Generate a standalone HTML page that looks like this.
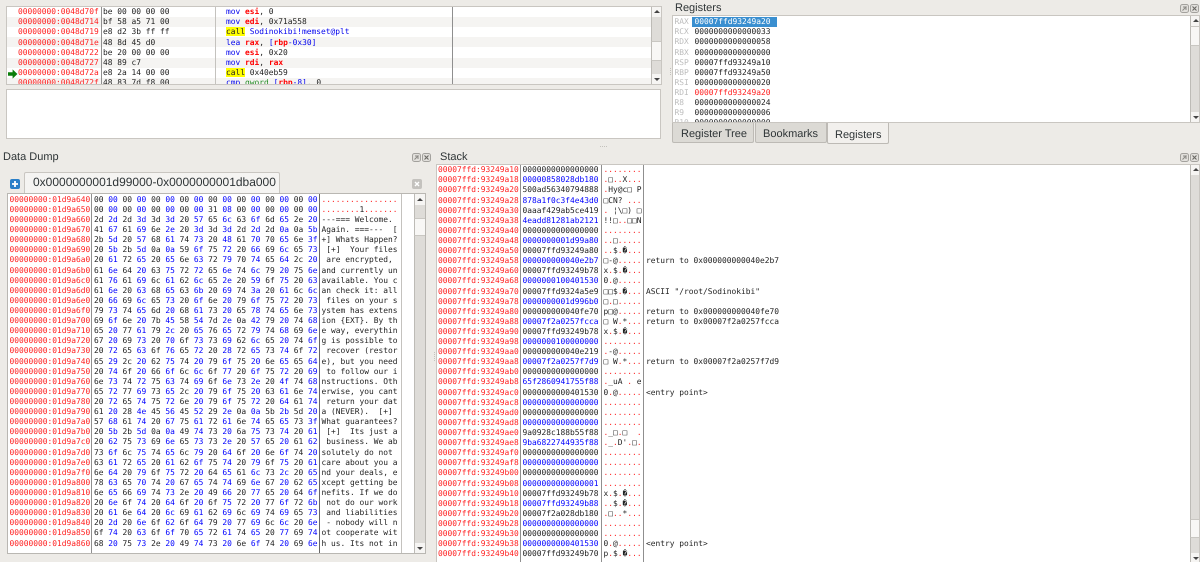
<!DOCTYPE html>
<html><head><meta charset="utf-8"><title>Data Dump</title>
<style>
html,body{margin:0;padding:0}
body{width:1200px;height:562px;overflow:hidden;background:#edebe7;position:relative;font-family:"Liberation Sans",sans-serif;text-rendering:geometricPrecision}
div,pre,svg{position:absolute;margin:0}
pre{font:7.9px/10.11px "DejaVu Sans Mono",monospace;color:#222;text-rendering:geometricPrecision;filter:blur(.3px)}
pre b{font-weight:normal;color:#0000ff}
pre i{font-style:normal;color:#ff2020}
pre u{text-decoration:none;font-weight:bold;color:#ff0000}
pre em{font-style:normal;color:#0000ee}
pre s{text-decoration:none;background:#ffff00;color:#222}
pre q{quotes:none;color:#228b22}
.red{color:#ff2020}
.frame{background:#fff;border:1px solid #c9c6c1;box-sizing:border-box}
.t{font-size:11px;line-height:13px;color:#2e3436;white-space:nowrap}
.v{width:1px;background:#8f8f8f}
.tr{background:#dedcd8;border-left:1px solid #bdbbb6;box-sizing:border-box}
.th{background:#f8f7f5;border-left:1px solid #bdbbb6;border-top:1px solid #c9c7c2;border-bottom:1px solid #c9c7c2;box-sizing:border-box}
.ar{background:#f6f5f3;border-left:1px solid #bdbbb6;box-sizing:border-box}
.up,.dn{width:0;height:0;border-left:3px solid transparent;border-right:3px solid transparent}
.up{border-bottom:3px solid #444}
.dn{border-top:3px solid #444}
.st{background:#f5f4f2;height:10px}
.tab{background:#dcdad5;border:1px solid #bdbab5;border-top:0;border-radius:0 0 2px 2px;box-sizing:border-box}
.dv{width:1px;background:repeating-linear-gradient(#c4c2bd 0 1px,transparent 1px 2px)}
.dh{height:1px;background:repeating-linear-gradient(90deg,#c4c2bd 0 1px,transparent 1px 2px)}
</style></head><body>

<!-- Disassembly panel -->
<div class="frame" style="left:6px;top:6px;width:656px;height:79px;overflow:hidden">
<div class="st" style="left:0;top:10px;width:645px"></div>
<div class="st" style="left:0;top:30px;width:645px"></div>
<div class="st" style="left:0;top:51px;width:645px"></div>
<div class="st" style="left:0;top:71px;width:645px"></div>
<div class="v" style="left:94px;top:0;height:79px"></div>
<div style="left:208px;top:0;height:79px;width:1px;background:#c4c2be"></div>
<div class="v" style="left:445px;top:0;height:79px"></div>
<pre class="red" style="left:11px;top:0.2px">00000000:0048d70f
00000000:0048d714
00000000:0048d719
00000000:0048d71e
00000000:0048d722
00000000:0048d727
00000000:0048d72a
00000000:0048d72f</pre>
<pre style="left:96px;top:0.2px">be 00 00 00 00
bf 58 a5 71 00
e8 d2 3b ff ff
48 8d 45 d0
be 20 00 00 00
48 89 c7
e8 2a 14 00 00
48 83 7d f8 00</pre>
<pre style="left:219px;top:0.2px"><em>mov</em> <u>esi</u>, 0
<em>mov</em> <u>edi</u>, 0x71a558
<s>call</s> <em>Sodinokibi!memset@plt</em>
<em>lea</em> <u>rax</u>, <em>[</em><u>rbp</u><em>-0x30]</em>
<em>mov</em> <u>esi</u>, 0x20
<em>mov</em> <u>rdi</u>, <u>rax</u>
<s>call</s> 0x40eb59
<em>cmp</em> <q>qword</q> <em>[</em><u>rbp</u><em>-8]</em>, 0</pre>
<svg style="left:1px;top:62px" width="10" height="10" viewBox="0 0 10 10"><path d="M0 3.2H4.6V0.4L9.4 5L4.6 9.6V6.8H0Z" fill="#0a7d0a"/></svg>
<div class="tr" style="left:644px;top:0;width:10px;height:77px"></div>
<div class="ar" style="left:644px;top:0;width:10px;height:10px"></div>
<div class="up" style="left:647px;top:3px"></div>
<div class="th" style="left:644px;top:34px;width:10px;height:20px"></div>
<div class="ar" style="left:644px;top:67px;width:10px;height:10px"></div>
<div class="dn" style="left:647px;top:71px"></div>
</div>
<div class="frame" style="left:6px;top:89px;width:655px;height:50px"></div>
<div class="dh" style="left:600px;top:146px;width:8px"></div>
<div class="dv" style="left:670px;top:68px;height:8px"></div>
<div class="dv" style="left:434px;top:352px;height:10px"></div>

<!-- Registers -->
<div class="t" style="left:675px;top:2px">Registers</div>
<svg style="left:1180px;top:4px" width="20" height="9" viewBox="0 0 20 9"><rect x=".5" y=".5" width="8" height="8" rx="2" fill="#e2e0dc" stroke="#a3a19d"/><rect x="10.5" y=".5" width="8" height="8" rx="2" fill="#e2e0dc" stroke="#a3a19d"/><path d="M2.5 6.5L6.5 2.5M3 3H6V6" stroke="#8a8884" fill="none"/><path d="M12.5 2.5L16.5 6.5M16.5 2.5L12.5 6.5" stroke="#6a6864" stroke-width="1.1"/></svg>
<div class="frame" style="left:672px;top:15px;width:528px;height:108px;overflow:hidden">
<div style="left:19px;top:1px;width:85px;height:10px;background:#3a8fd0"></div>
<pre style="left:1.5px;top:1.2px;color:#bdbdbd">RAX
RCX
RDX
RBX
RSP
RBP
RSI
RDI
R8
R9
R10</pre>
<pre style="left:21.5px;top:1.2px"><span style="color:#fff">00007ffd93249a20</span>
0000000000000033
0000000000000058
0000000000000000
00007ffd93249a10
00007ffd93249a50
0000000000000020
<span style="color:#ff2020">00007ffd93249a20</span>
0000000000000024
0000000000000006
0000000000000000</pre>
<div class="tr" style="left:517px;top:0;width:10px;height:106px"></div>
<div class="ar" style="left:517px;top:0;width:10px;height:10px"></div>
<div class="up" style="left:519.5px;top:3px"></div>
<div class="th" style="left:517px;top:10px;width:10px;height:20px"></div>
<div class="ar" style="left:517px;top:96px;width:10px;height:10px"></div>
<div class="dn" style="left:519.5px;top:100px"></div>
</div>
<div class="tab" style="left:672px;top:123px;width:82px;height:20px"></div>
<div class="tab" style="left:755px;top:123px;width:72px;height:20px"></div>
<div class="tab" style="left:827px;top:123px;width:62px;height:21px;background:#f2f0ed"></div>
<div class="t" style="left:681px;top:128px">Register Tree</div>
<div class="t" style="left:763px;top:128px">Bookmarks</div>
<div class="t" style="left:835px;top:129px">Registers</div>

<!-- Data Dump -->
<div class="t" style="left:3px;top:151px">Data Dump</div>
<svg style="left:412px;top:153px" width="20" height="9" viewBox="0 0 20 9"><rect x=".5" y=".5" width="8" height="8" rx="2" fill="#e2e0dc" stroke="#a3a19d"/><rect x="10.5" y=".5" width="8" height="8" rx="2" fill="#e2e0dc" stroke="#a3a19d"/><path d="M2.5 6.5L6.5 2.5M3 3H6V6" stroke="#8a8884" fill="none"/><path d="M12.5 2.5L16.5 6.5M16.5 2.5L12.5 6.5" stroke="#6a6864" stroke-width="1.1"/></svg>
<svg style="left:10px;top:179px" width="10" height="10" viewBox="0 0 10 10"><rect width="10" height="10" rx="2" fill="#2a7fc8"/><path d="M5 2V8M2 5H8" stroke="#fff" stroke-width="1.8"/></svg>
<div style="left:24px;top:172px;width:256px;height:22px;background:#f5f4f2;border:1px solid #c9c6c1;border-bottom:0;border-radius:2px 2px 0 0;box-sizing:border-box"></div>
<div class="t" style="left:33px;top:175px;font-size:12px;line-height:14px">0x0000000001d99000-0x0000000001dba000</div>
<svg style="left:412px;top:179px" width="10" height="10" viewBox="0 0 10 10"><rect width="10" height="10" rx="2" fill="#c4c2be"/><path d="M3 3L7 7M7 3L3 7" stroke="#fff" stroke-width="1.4"/></svg>
<div class="frame" style="left:7px;top:193px;width:419px;height:361px;overflow:hidden;border:1px solid #b9b7b2">
<div class="v" style="left:83px;top:0;height:360px"></div>
<div class="v" style="left:311px;top:0;height:360px;background:#666"></div>
<div class="v" style="left:393px;top:0;height:360px;background:#c4c2be"></div>
<pre class="red" style="left:1.5px;top:0.8px">00000000:01d9a640
00000000:01d9a650
00000000:01d9a660
00000000:01d9a670
00000000:01d9a680
00000000:01d9a690
00000000:01d9a6a0
00000000:01d9a6b0
00000000:01d9a6c0
00000000:01d9a6d0
00000000:01d9a6e0
00000000:01d9a6f0
00000000:01d9a700
00000000:01d9a710
00000000:01d9a720
00000000:01d9a730
00000000:01d9a740
00000000:01d9a750
00000000:01d9a760
00000000:01d9a770
00000000:01d9a780
00000000:01d9a790
00000000:01d9a7a0
00000000:01d9a7b0
00000000:01d9a7c0
00000000:01d9a7d0
00000000:01d9a7e0
00000000:01d9a7f0
00000000:01d9a800
00000000:01d9a810
00000000:01d9a820
00000000:01d9a830
00000000:01d9a840
00000000:01d9a850
00000000:01d9a860</pre>
<pre style="left:86px;top:0.8px">00 <b>00</b> 00 <b>00</b> 00 <b>00</b> 00 <b>00</b> 00 <b>00</b> 00 <b>00</b> 00 <b>00</b> 00 <b>00</b>
00 <b>00</b> 00 <b>00</b> 00 <b>00</b> 00 <b>00</b> 31 <b>08</b> 00 <b>00</b> 00 <b>00</b> 00 <b>00</b>
2d <b>2d</b> 2d <b>3d</b> 3d <b>3d</b> 20 <b>57</b> 65 <b>6c</b> 63 <b>6f</b> 6d <b>65</b> 2e <b>20</b>
41 <b>67</b> 61 <b>69</b> 6e <b>2e</b> 20 <b>3d</b> 3d <b>3d</b> 2d <b>2d</b> 2d <b>0a</b> 0a <b>5b</b>
2b <b>5d</b> 20 <b>57</b> 68 <b>61</b> 74 <b>73</b> 20 <b>48</b> 61 <b>70</b> 70 <b>65</b> 6e <b>3f</b>
20 <b>5b</b> 2b <b>5d</b> 0a <b>0a</b> 59 <b>6f</b> 75 <b>72</b> 20 <b>66</b> 69 <b>6c</b> 65 <b>73</b>
20 <b>61</b> 72 <b>65</b> 20 <b>65</b> 6e <b>63</b> 72 <b>79</b> 70 <b>74</b> 65 <b>64</b> 2c <b>20</b>
61 <b>6e</b> 64 <b>20</b> 63 <b>75</b> 72 <b>72</b> 65 <b>6e</b> 74 <b>6c</b> 79 <b>20</b> 75 <b>6e</b>
61 <b>76</b> 61 <b>69</b> 6c <b>61</b> 62 <b>6c</b> 65 <b>2e</b> 20 <b>59</b> 6f <b>75</b> 20 <b>63</b>
61 <b>6e</b> 20 <b>63</b> 68 <b>65</b> 63 <b>6b</b> 20 <b>69</b> 74 <b>3a</b> 20 <b>61</b> 6c <b>6c</b>
20 <b>66</b> 69 <b>6c</b> 65 <b>73</b> 20 <b>6f</b> 6e <b>20</b> 79 <b>6f</b> 75 <b>72</b> 20 <b>73</b>
79 <b>73</b> 74 <b>65</b> 6d <b>20</b> 68 <b>61</b> 73 <b>20</b> 65 <b>78</b> 74 <b>65</b> 6e <b>73</b>
69 <b>6f</b> 6e <b>20</b> 7b <b>45</b> 58 <b>54</b> 7d <b>2e</b> 0a <b>42</b> 79 <b>20</b> 74 <b>68</b>
65 <b>20</b> 77 <b>61</b> 79 <b>2c</b> 20 <b>65</b> 76 <b>65</b> 72 <b>79</b> 74 <b>68</b> 69 <b>6e</b>
67 <b>20</b> 69 <b>73</b> 20 <b>70</b> 6f <b>73</b> 73 <b>69</b> 62 <b>6c</b> 65 <b>20</b> 74 <b>6f</b>
20 <b>72</b> 65 <b>63</b> 6f <b>76</b> 65 <b>72</b> 20 <b>28</b> 72 <b>65</b> 73 <b>74</b> 6f <b>72</b>
65 <b>29</b> 2c <b>20</b> 62 <b>75</b> 74 <b>20</b> 79 <b>6f</b> 75 <b>20</b> 6e <b>65</b> 65 <b>64</b>
20 <b>74</b> 6f <b>20</b> 66 <b>6f</b> 6c <b>6c</b> 6f <b>77</b> 20 <b>6f</b> 75 <b>72</b> 20 <b>69</b>
6e <b>73</b> 74 <b>72</b> 75 <b>63</b> 74 <b>69</b> 6f <b>6e</b> 73 <b>2e</b> 20 <b>4f</b> 74 <b>68</b>
65 <b>72</b> 77 <b>69</b> 73 <b>65</b> 2c <b>20</b> 79 <b>6f</b> 75 <b>20</b> 63 <b>61</b> 6e <b>74</b>
20 <b>72</b> 65 <b>74</b> 75 <b>72</b> 6e <b>20</b> 79 <b>6f</b> 75 <b>72</b> 20 <b>64</b> 61 <b>74</b>
61 <b>20</b> 28 <b>4e</b> 45 <b>56</b> 45 <b>52</b> 29 <b>2e</b> 0a <b>0a</b> 5b <b>2b</b> 5d <b>20</b>
57 <b>68</b> 61 <b>74</b> 20 <b>67</b> 75 <b>61</b> 72 <b>61</b> 6e <b>74</b> 65 <b>65</b> 73 <b>3f</b>
20 <b>5b</b> 2b <b>5d</b> 0a <b>0a</b> 49 <b>74</b> 73 <b>20</b> 6a <b>75</b> 73 <b>74</b> 20 <b>61</b>
20 <b>62</b> 75 <b>73</b> 69 <b>6e</b> 65 <b>73</b> 73 <b>2e</b> 20 <b>57</b> 65 <b>20</b> 61 <b>62</b>
73 <b>6f</b> 6c <b>75</b> 74 <b>65</b> 6c <b>79</b> 20 <b>64</b> 6f <b>20</b> 6e <b>6f</b> 74 <b>20</b>
63 <b>61</b> 72 <b>65</b> 20 <b>61</b> 62 <b>6f</b> 75 <b>74</b> 20 <b>79</b> 6f <b>75</b> 20 <b>61</b>
6e <b>64</b> 20 <b>79</b> 6f <b>75</b> 72 <b>20</b> 64 <b>65</b> 61 <b>6c</b> 73 <b>2c</b> 20 <b>65</b>
78 <b>63</b> 65 <b>70</b> 74 <b>20</b> 67 <b>65</b> 74 <b>74</b> 69 <b>6e</b> 67 <b>20</b> 62 <b>65</b>
6e <b>65</b> 66 <b>69</b> 74 <b>73</b> 2e <b>20</b> 49 <b>66</b> 20 <b>77</b> 65 <b>20</b> 64 <b>6f</b>
20 <b>6e</b> 6f <b>74</b> 20 <b>64</b> 6f <b>20</b> 6f <b>75</b> 72 <b>20</b> 77 <b>6f</b> 72 <b>6b</b>
20 <b>61</b> 6e <b>64</b> 20 <b>6c</b> 69 <b>61</b> 62 <b>69</b> 6c <b>69</b> 74 <b>69</b> 65 <b>73</b>
20 <b>2d</b> 20 <b>6e</b> 6f <b>62</b> 6f <b>64</b> 79 <b>20</b> 77 <b>69</b> 6c <b>6c</b> 20 <b>6e</b>
6f <b>74</b> 20 <b>63</b> 6f <b>6f</b> 70 <b>65</b> 72 <b>61</b> 74 <b>65</b> 20 <b>77</b> 69 <b>74</b>
68 <b>20</b> 75 <b>73</b> 2e <b>20</b> 49 <b>74</b> 73 <b>20</b> 6e <b>6f</b> 74 <b>20</b> 69 <b>6e</b></pre>
<pre style="left:313.5px;top:0.8px"><i>................</i>
<i>........</i>1<i>.......</i>
---=== Welcome. 
Again. ===---  [
+] Whats Happen?
 [+]  Your files
 are encrypted, 
and currently un
available. You c
an check it: all
 files on your s
ystem has extens
ion {EXT}. By th
e way, everythin
g is possible to
 recover (restor
e), but you need
 to follow our i
nstructions. Oth
erwise, you cant
 return your dat
a (NEVER).  [+] 
What guarantees?
 [+]  Its just a
 business. We ab
solutely do not 
care about you a
nd your deals, e
xcept getting be
nefits. If we do
 not do our work
 and liabilities
 - nobody will n
ot cooperate wit
h us. Its not in</pre>
<div class="tr" style="left:406px;top:0;width:11px;height:359px"></div>
<div class="ar" style="left:406px;top:0;width:11px;height:11px"></div>
<div class="up" style="left:409px;top:4px"></div>
<div class="th" style="left:406px;top:24px;width:11px;height:18px"></div>
<div class="ar" style="left:406px;top:349px;width:11px;height:10px"></div>
<div class="dn" style="left:409px;top:353px"></div>
</div>

<!-- Stack -->
<div class="t" style="left:440px;top:151px">Stack</div>
<svg style="left:1180px;top:153px" width="20" height="9" viewBox="0 0 20 9"><rect x=".5" y=".5" width="8" height="8" rx="2" fill="#e2e0dc" stroke="#a3a19d"/><rect x="10.5" y=".5" width="8" height="8" rx="2" fill="#e2e0dc" stroke="#a3a19d"/><path d="M2.5 6.5L6.5 2.5M3 3H6V6" stroke="#8a8884" fill="none"/><path d="M12.5 2.5L16.5 6.5M16.5 2.5L12.5 6.5" stroke="#6a6864" stroke-width="1.1"/></svg>
<div class="frame" style="left:436px;top:164px;width:764px;height:398px;overflow:hidden;border-bottom:0">
<div class="v" style="left:83px;top:0;height:398px"></div>
<div class="v" style="left:164px;top:0;height:398px"></div>
<div class="v" style="left:206px;top:0;height:398px"></div>
<pre class="red" style="left:1px;top:0.2px">00007ffd:93249a10
00007ffd:93249a18
00007ffd:93249a20
00007ffd:93249a28
00007ffd:93249a30
00007ffd:93249a38
00007ffd:93249a40
00007ffd:93249a48
00007ffd:93249a50
00007ffd:93249a58
00007ffd:93249a60
00007ffd:93249a68
00007ffd:93249a70
00007ffd:93249a78
00007ffd:93249a80
00007ffd:93249a88
00007ffd:93249a90
00007ffd:93249a98
00007ffd:93249aa0
00007ffd:93249aa8
00007ffd:93249ab0
00007ffd:93249ab8
00007ffd:93249ac0
00007ffd:93249ac8
00007ffd:93249ad0
00007ffd:93249ad8
00007ffd:93249ae0
00007ffd:93249ae8
00007ffd:93249af0
00007ffd:93249af8
00007ffd:93249b00
00007ffd:93249b08
00007ffd:93249b10
00007ffd:93249b18
00007ffd:93249b20
00007ffd:93249b28
00007ffd:93249b30
00007ffd:93249b38
00007ffd:93249b40</pre>
<pre style="left:85.5px;top:0.2px">0000000000000000
<b>00000858028db180</b>
500ad56340794888
<b>878a1f0c3f4e43d0</b>
0aaaf429ab5ce419
<b>4eadd81281ab2121</b>
0000000000000000
<b>0000000001d99a80</b>
00007ffd93249a80
<b>000000000040e2b7</b>
00007ffd93249b78
<b>0000000100401530</b>
00007ffd9324a5e9
<b>0000000001d996b0</b>
000000000040fe70
<b>00007f2a0257fcca</b>
00007ffd93249b78
<b>0000000100000000</b>
000000000040e219
<b>00007f2a0257f7d9</b>
0000000000000000
<b>65f2860941755f88</b>
0000000000401530
<b>0000000000000000</b>
0000000000000000
<b>0000000000000000</b>
9a0928c188b55f88
<b>9ba6822744935f88</b>
0000000000000000
<b>0000000000000000</b>
0000000000000000
<b>0000000000000001</b>
00007ffd93249b78
<b>00007ffd93249b88</b>
00007f2a028db180
<b>0000000000000000</b>
0000000000000000
<b>0000000000401530</b>
00007ffd93249b70</pre>
<pre style="left:166.5px;top:0.2px"><i>........</i>
<i>.</i>□<i>..</i>X<i>...</i>
<i>.</i>Hy@c□ P
□CN? <i>...</i>
<i>.</i> ¦\□) □
!!□<i>..</i>□□N
<i>........</i>
<i>..</i>□<i>.....</i>
<i>..</i>$<i>.</i>�<i>...</i>
□-@<i>.....</i>
x<i>.</i>$<i>.</i>�<i>...</i>
0<i>.</i>@<i>.....</i>
□□$<i>.</i>�<i>...</i>
□<i>.</i>□<i>.....</i>
p□@<i>.....</i>
□ W<i>.</i>*<i>...</i>
x<i>.</i>$<i>.</i>�<i>...</i>
<i>........</i>
<i>.</i>-@<i>.....</i>
□ W<i>.</i>*<i>...</i>
<i>........</i>
<i>.</i>_uA <i>.</i> e
0<i>.</i>@<i>.....</i>
<i>........</i>
<i>........</i>
<i>........</i>
<i>.</i>_□<i>.</i>□  <i>.</i>
<i>.</i>_<i>.</i>D'<i>.</i>□<i>.</i>
<i>........</i>
<i>........</i>
<i>........</i>
<i>........</i>
x<i>.</i>$<i>.</i>�<i>...</i>
<i>..</i>$<i>.</i>�<i>...</i>
<i>.</i>□<i>..</i>*<i>...</i>
<i>........</i>
<i>........</i>
0<i>.</i>@<i>.....</i>
p<i>.</i>$<i>.</i>�<i>...</i></pre>
<pre style="left:209px;top:91.19px">return to 0x000000000040e2b7</pre>
<pre style="left:209px;top:121.52px">ASCII "/root/Sodinokibi"</pre>
<pre style="left:209px;top:141.74px">return to 0x000000000040fe70</pre>
<pre style="left:209px;top:151.85px">return to 0x00007f2a0257fcca</pre>
<pre style="left:209px;top:192.29px">return to 0x00007f2a0257f7d9</pre>
<pre style="left:209px;top:222.62px">&lt;entry point&gt;</pre>
<pre style="left:209px;top:374.27px">&lt;entry point&gt;</pre>
<div class="tr" style="left:753px;top:0;width:10px;height:398px"></div>
<div class="ar" style="left:753px;top:0;width:10px;height:10px"></div>
<div class="up" style="left:755.5px;top:3px"></div>
<div class="th" style="left:753px;top:354px;width:10px;height:19px"></div>
<div class="ar" style="left:753px;top:388px;width:10px;height:10px"></div>
<div class="dn" style="left:755.5px;top:392px"></div>
</div>
</body></html>
